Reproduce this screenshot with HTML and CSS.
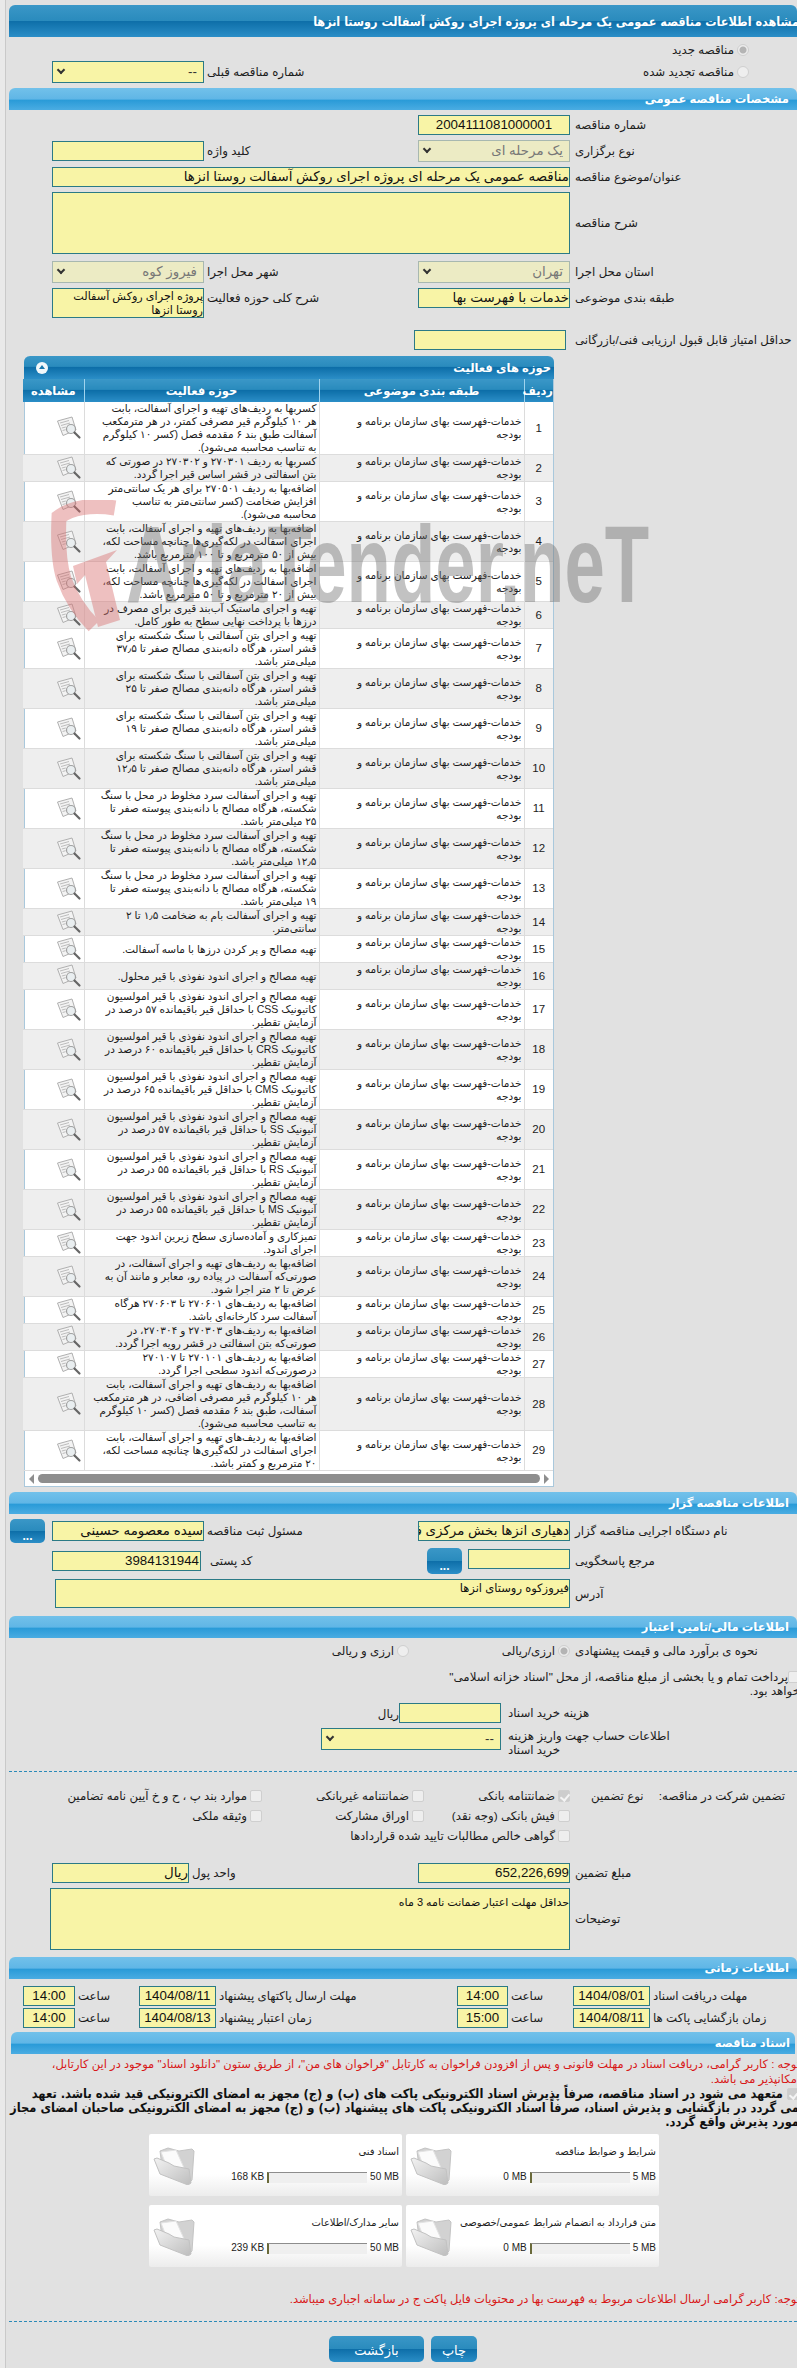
FILE: index.html
```html
<!DOCTYPE html>
<html lang="fa" dir="rtl">
<head>
<meta charset="utf-8">
<title>مشاهده اطلاعات مناقصه</title>
<link rel="stylesheet" href="styles.css">
</head>
<body>
<svg class="defs" width="0" height="0" aria-hidden="true">
  <defs>
    <symbol id="doc" viewBox="0 0 26 24">
      <path d="M1.5 5 16 1l4 13-13 5.500z" fill="#f3f3f3" stroke="#b0b0b0"/>
      <path d="M4 7l9-2.500M5 9.500l9-2.500M5.800 12l4-1M6.600 14.500l3-.8" stroke="#bcbcbc" fill="none"/>
      <circle cx="15" cy="13" r="4.500" fill="#e9eef0" stroke="#a0a0a0" stroke-width="1.200"/>
      <path d="M18.500 16.500l5 5" stroke="#666" stroke-width="2.200" stroke-linecap="round"/>
    </symbol>
    <linearGradient id="fg" x1="0" y1="0" x2="1" y2="1">
      <stop offset="0" stop-color="#f2f2f2"/>
      <stop offset="1" stop-color="#bdbdbd"/>
    </linearGradient>
    <symbol id="folder" viewBox="0 0 42 38">
      <path d="M7 4 15 1l11 3 13-2 2 2-2 29-4 4L9 20z" fill="#d2d2d2" stroke="#c4c4c4"/>
      <path d="M8 5l15-2 9 20-15 5z" fill="#fbfbfb" stroke="#e3e3e3"/>
      <path d="M1 12l3-1 12 5 5 3 15 3 2 14-3 2L7 27z" fill="url(#fg)" stroke="#c2c2c2"/>
    </symbol>
  </defs>
</svg>

<div class="shell">
<main class="page">

  <h1 class="title-bar"><span>مشاهده اطلاعات مناقصه عمومی یک مرحله ای پروژه اجرای روکش آسفالت روستا انزها</span></h1>

  <div class="row r-radio1">
    <label class="choice"><i class="radio on"></i><span>مناقصه جدید</span></label>
  </div>
  <div class="row r-prev">
    <label class="choice c-second"><i class="radio"></i><span>مناقصه تجدید شده</span></label>
    <div class="lbl l3">شماره مناقصه قبلی</div>
    <div class="select"><b class="chev"></b><span>--</span></div>
  </div>

  <h2 class="section">مشخصات مناقصه عمومی</h2>

  <div class="row m5">
    <div class="lbl">شماره مناقصه</div>
    <div class="field num center">2004111081000001</div>
  </div>
  <div class="row m5 mid">
    <div class="lbl">نوع برگزاری</div>
    <div class="select off"><b class="chev"></b><span>یک مرحله ای</span></div>
    <div class="lbl l3">کلید واژه</div>
    <div class="field"></div>
  </div>
  <div class="row m5">
    <div class="lbl">عنوان/موضوع مناقصه</div>
    <div class="field wide big">مناقصه عمومی یک مرحله ای پروژه اجرای روکش آسفالت روستا انزها</div>
  </div>
  <div class="row m5 mid">
    <div class="lbl">شرح مناقصه</div>
    <div class="field wide area"></div>
  </div>
  <div class="row m7">
    <div class="lbl">استان محل اجرا</div>
    <div class="select off"><b class="chev"></b><span>تهران</span></div>
    <div class="lbl l3">شهر محل اجرا</div>
    <div class="select off"><b class="chev"></b><span>فیروز کوه</span></div>
  </div>
  <div class="row m5 top">
    <div class="lbl">طبقه بندی موضوعی</div>
    <div class="field big">خدمات با فهرست بها</div>
    <div class="lbl l3">شرح کلی حوزه فعالیت</div>
    <div class="field two">پروژه اجرای روکش آسفالت<br>روستا انزها</div>
  </div>
  <div class="row m12">
    <div class="lbl">حداقل امتیاز قابل قبول ارزیابی فنی/بازرگانی</div>
    <div class="field shift"></div>
  </div>

  <section class="panel">
    <div class="panel-bar"><span>حوزه های فعالیت</span><b class="collapse"></b></div>
    <table class="grid">
      <colgroup><col class="c1"><col class="c2"><col class="c3"><col class="c4"></colgroup>
      <thead>
        <tr><th>ردیف</th><th>طبقه بندی موضوعی</th><th>حوزه فعالیت</th><th>مشاهده</th></tr>
      </thead>
      <tbody>
        <tr><td class="n">1</td><td class="t">خدمات-فهرست بهای سازمان برنامه و<br>بودجه</td><td class="t">کسربها به ردیف‌های تهیه و اجرای آسفالت، بابت<br>هر ۱۰ کیلوگرم قیر مصرفی کمتر، در هر مترمکعب<br>آسفالت طبق بند ۶ مقدمه فصل (کسر ۱۰ کیلوگرم<br>به تناسب محاسبه می‌شود).</td><td class="v"><svg class="ico"><use href="#doc"/></svg></td></tr>
        <tr><td class="n">2</td><td class="t">خدمات-فهرست بهای سازمان برنامه و<br>بودجه</td><td class="t">کسربها به ردیف ۲۷۰۳۰۱ و ۲۷۰۳۰۲ در صورتی که<br>بتن اسفالتی در قشر اساس قیر اجرا گردد.</td><td class="v"><svg class="ico"><use href="#doc"/></svg></td></tr>
        <tr><td class="n">3</td><td class="t">خدمات-فهرست بهای سازمان برنامه و<br>بودجه</td><td class="t">اضافه‌بها به ردیف ۲۷۰۵۰۱ برای هر یک سانتی‌متر<br>افزایش ضخامت (کسر سانتی‌متر به تناسب<br>محاسبه می‌شود).</td><td class="v"><svg class="ico"><use href="#doc"/></svg></td></tr>
        <tr><td class="n">4</td><td class="t">خدمات-فهرست بهای سازمان برنامه و<br>بودجه</td><td class="t">اضافه‌بها به ردیف‌های تهیه و اجرای آسفالت، بابت<br>اجرای اسفالت در لکه‌گیری‌ها چنانچه مساحت لکه،<br>بیش از ۵۰ مترمربع و تا ۱۰۰ مترمربع باشد.</td><td class="v"><svg class="ico"><use href="#doc"/></svg></td></tr>
        <tr><td class="n">5</td><td class="t">خدمات-فهرست بهای سازمان برنامه و<br>بودجه</td><td class="t">اضافه‌بها به ردیف‌های تهیه و اجرای آسفالت، بابت<br>اجرای اسفالت در لکه‌گیری‌ها چنانچه مساحت لکه،<br>بیش از ۲۰ مترمربع و تا ۵۰ مترمربع باشد.</td><td class="v"><svg class="ico"><use href="#doc"/></svg></td></tr>
        <tr><td class="n">6</td><td class="t">خدمات-فهرست بهای سازمان برنامه و<br>بودجه</td><td class="t">تهیه و اجرای ماستیک آب‌بند قیری برای مصرف در<br>درزها با پرداخت نهایی سطح به طور کامل.</td><td class="v"><svg class="ico"><use href="#doc"/></svg></td></tr>
        <tr><td class="n">7</td><td class="t">خدمات-فهرست بهای سازمان برنامه و<br>بودجه</td><td class="t">تهیه و اجرای بتن آسفالتی با سنگ شکسته برای<br>قشر استر، هرگاه دانه‌بندی مصالح صفر تا ۳۷٫۵<br>میلی‌متر باشد.</td><td class="v"><svg class="ico"><use href="#doc"/></svg></td></tr>
        <tr><td class="n">8</td><td class="t">خدمات-فهرست بهای سازمان برنامه و<br>بودجه</td><td class="t">تهیه و اجرای بتن آسفالتی با سنگ شکسته برای<br>قشر استر، هرگاه دانه‌بندی مصالح صفر تا ۲۵<br>میلی‌متر باشد.</td><td class="v"><svg class="ico"><use href="#doc"/></svg></td></tr>
        <tr><td class="n">9</td><td class="t">خدمات-فهرست بهای سازمان برنامه و<br>بودجه</td><td class="t">تهیه و اجرای بتن آسفالتی با سنگ شکسته برای<br>قشر استر، هرگاه دانه‌بندی مصالح صفر تا ۱۹<br>میلی‌متر باشد.</td><td class="v"><svg class="ico"><use href="#doc"/></svg></td></tr>
        <tr><td class="n">10</td><td class="t">خدمات-فهرست بهای سازمان برنامه و<br>بودجه</td><td class="t">تهیه و اجرای بتن آسفالتی با سنگ شکسته برای<br>قشر استر، هرگاه دانه‌بندی مصالح صفر تا ۱۲٫۵<br>میلی‌متر باشد.</td><td class="v"><svg class="ico"><use href="#doc"/></svg></td></tr>
        <tr><td class="n">11</td><td class="t">خدمات-فهرست بهای سازمان برنامه و<br>بودجه</td><td class="t">تهیه و اجرای آسفالت سرد مخلوط در محل با سنگ<br>شکسته، هرگاه مصالح با دانه‌بندی پیوسته صفر تا<br>۲۵ میلی‌متر باشد.</td><td class="v"><svg class="ico"><use href="#doc"/></svg></td></tr>
        <tr><td class="n">12</td><td class="t">خدمات-فهرست بهای سازمان برنامه و<br>بودجه</td><td class="t">تهیه و اجرای آسفالت سرد مخلوط در محل با سنگ<br>شکسته، هرگاه مصالح با دانه‌بندی پیوسته صفر تا<br>۱۲٫۵ میلی‌متر باشد.</td><td class="v"><svg class="ico"><use href="#doc"/></svg></td></tr>
        <tr><td class="n">13</td><td class="t">خدمات-فهرست بهای سازمان برنامه و<br>بودجه</td><td class="t">تهیه و اجرای آسفالت سرد مخلوط در محل با سنگ<br>شکسته، هرگاه مصالح با دانه‌بندی پیوسته صفر تا<br>۱۹ میلی‌متر باشد.</td><td class="v"><svg class="ico"><use href="#doc"/></svg></td></tr>
        <tr><td class="n">14</td><td class="t">خدمات-فهرست بهای سازمان برنامه و<br>بودجه</td><td class="t">تهیه و اجرای آسفالت بام به ضخامت ۱٫۵ تا ۲<br>سانتی‌متر.</td><td class="v"><svg class="ico"><use href="#doc"/></svg></td></tr>
        <tr><td class="n">15</td><td class="t">خدمات-فهرست بهای سازمان برنامه و<br>بودجه</td><td class="t">تهیه مصالح و پر کردن درزها با ماسه آسفالت.</td><td class="v"><svg class="ico"><use href="#doc"/></svg></td></tr>
        <tr><td class="n">16</td><td class="t">خدمات-فهرست بهای سازمان برنامه و<br>بودجه</td><td class="t">تهیه مصالح و اجرای اندود نفوذی با قیر محلول.</td><td class="v"><svg class="ico"><use href="#doc"/></svg></td></tr>
        <tr><td class="n">17</td><td class="t">خدمات-فهرست بهای سازمان برنامه و<br>بودجه</td><td class="t">تهیه مصالح و اجرای اندود نفوذی با قیر امولسیون<br>کاتیونیک CSS با حداقل قیر باقیمانده ۵۷ درصد در<br>آزمایش تقطیر.</td><td class="v"><svg class="ico"><use href="#doc"/></svg></td></tr>
        <tr><td class="n">18</td><td class="t">خدمات-فهرست بهای سازمان برنامه و<br>بودجه</td><td class="t">تهیه مصالح و اجرای اندود نفوذی با قیر امولسیون<br>کاتیونیک CRS با حداقل قیر باقیمانده ۶۰ درصد در<br>آزمایش تقطیر.</td><td class="v"><svg class="ico"><use href="#doc"/></svg></td></tr>
        <tr><td class="n">19</td><td class="t">خدمات-فهرست بهای سازمان برنامه و<br>بودجه</td><td class="t">تهیه مصالح و اجرای اندود نفوذی با قیر امولسیون<br>کاتیونیک CMS با حداقل قیر باقیمانده ۶۵ درصد در<br>آزمایش تقطیر.</td><td class="v"><svg class="ico"><use href="#doc"/></svg></td></tr>
        <tr><td class="n">20</td><td class="t">خدمات-فهرست بهای سازمان برنامه و<br>بودجه</td><td class="t">تهیه مصالح و اجرای اندود نفوذی با قیر امولسیون<br>آنیونیک SS با حداقل قیر باقیمانده ۵۷ درصد در<br>آزمایش تقطیر.</td><td class="v"><svg class="ico"><use href="#doc"/></svg></td></tr>
        <tr><td class="n">21</td><td class="t">خدمات-فهرست بهای سازمان برنامه و<br>بودجه</td><td class="t">تهیه مصالح و اجرای اندود نفوذی با قیر امولسیون<br>آنیونیک RS با حداقل قیر باقیمانده ۵۵ درصد در<br>آزمایش تقطیر.</td><td class="v"><svg class="ico"><use href="#doc"/></svg></td></tr>
        <tr><td class="n">22</td><td class="t">خدمات-فهرست بهای سازمان برنامه و<br>بودجه</td><td class="t">تهیه مصالح و اجرای اندود نفوذی با قیر امولسیون<br>آنیونیک MS با حداقل قیر باقیمانده ۵۵ درصد در<br>آزمایش تقطیر.</td><td class="v"><svg class="ico"><use href="#doc"/></svg></td></tr>
        <tr><td class="n">23</td><td class="t">خدمات-فهرست بهای سازمان برنامه و<br>بودجه</td><td class="t">تمیزکاری و آماده‌سازی سطح زیرین اندود جهت<br>اجرای اندود.</td><td class="v"><svg class="ico"><use href="#doc"/></svg></td></tr>
        <tr><td class="n">24</td><td class="t">خدمات-فهرست بهای سازمان برنامه و<br>بودجه</td><td class="t">اضافه‌بها به ردیف‌های تهیه و اجرای آسفالت، در<br>صورتی‌که آسفالت در پیاده رو، معابر و مانند آن به<br>عرض تا ۲ متر اجرا شود.</td><td class="v"><svg class="ico"><use href="#doc"/></svg></td></tr>
        <tr><td class="n">25</td><td class="t">خدمات-فهرست بهای سازمان برنامه و<br>بودجه</td><td class="t">اضافه‌بها به ردیف‌های ۲۷۰۶۰۱ تا ۲۷۰۶۰۳ هرگاه<br>آسفالت سرد کارخانه‌ای باشد.</td><td class="v"><svg class="ico"><use href="#doc"/></svg></td></tr>
        <tr><td class="n">26</td><td class="t">خدمات-فهرست بهای سازمان برنامه و<br>بودجه</td><td class="t">اضافه‌بها به ردیف‌های ۲۷۰۳۰۳ و ۲۷۰۳۰۴، در<br>صورتی‌که بتن اسفالتی در قشر رویه اجرا گردد.</td><td class="v"><svg class="ico"><use href="#doc"/></svg></td></tr>
        <tr><td class="n">27</td><td class="t">خدمات-فهرست بهای سازمان برنامه و<br>بودجه</td><td class="t">اضافه‌بها به ردیف‌های ۲۷۰۱۰۱ تا ۲۷۰۱۰۷<br>درصورتی‌که اندود سطحی اجرا گردد.</td><td class="v"><svg class="ico"><use href="#doc"/></svg></td></tr>
        <tr><td class="n">28</td><td class="t">خدمات-فهرست بهای سازمان برنامه و<br>بودجه</td><td class="t">اضافه‌بها به ردیف‌های تهیه و اجرای آسفالت، بابت<br>هر ۱۰ کیلوگرم قیر مصرفی اضافی، در هر مترمکعب<br>آسفالت، طبق بند ۶ مقدمه فصل (کسر ۱۰ کیلوگرم<br>به تناسب محاسبه می‌شود).</td><td class="v"><svg class="ico"><use href="#doc"/></svg></td></tr>
        <tr><td class="n">29</td><td class="t">خدمات-فهرست بهای سازمان برنامه و<br>بودجه</td><td class="t">اضافه‌بها به ردیف‌های تهیه و اجرای آسفالت، بابت<br>اجرای اسفالت در لکه‌گیری‌ها چنانچه مساحت لکه،<br>۲۰ مترمربع و کمتر باشد.</td><td class="v"><svg class="ico"><use href="#doc"/></svg></td></tr>
      </tbody>
    </table>
    <div class="hscroll"><i class="arrow right"></i><i class="thumb"></i><i class="arrow left"></i></div>
    <div class="watermark" aria-hidden="true">
      <svg class="wm-shield" viewBox="0 0 90 145">
        <path d="M64 8C40 4 20 8 8 17c-1 22-1 44 5 62 6 17 16 33 30 47" fill="none" stroke="#d86a6a" stroke-width="15"/>
        <path d="M22 66 66 50 55 62l14 58-22 7-13-52-8 9z" fill="#d86a6a"/>
      </svg>
      <span class="wm-text">AriaTender.neT</span>
    </div>
  </section>

  <h2 class="section m5">اطلاعات مناقصه گزار</h2>

  <div class="row m5 r-owner">
    <div class="lbl">نام دستگاه اجرایی مناقصه گزار</div>
    <div class="field big">دهیاری انزها بخش مرکزی فیروزکوه</div>
    <div class="lbl l3">مسئول ثبت مناقصه</div>
    <div class="field big">سیده معصومه حسینی</div>
    <button class="btn dots" type="button">...</button>
  </div>
  <div class="row m5 r-ref">
    <div class="lbl">مرجع پاسخگویی</div>
    <div class="ref-cell"><div class="field"></div><button class="btn dots tall" type="button">...</button></div>
    <div class="lbl l6">کد پستی</div>
    <div class="field num post">3984131944</div>
  </div>
  <div class="row m5 mid">
    <div class="lbl">آدرس</div>
    <div class="field wide addr">فیروزکوه روستای انزها</div>
  </div>

  <h2 class="section m8">اطلاعات مالی/تامین اعتبار</h2>

  <div class="row m6 r-fin">
    <div class="lbl">نحوه ی برآورد مالی و قیمت پیشنهادی</div>
    <div class="fin-opts">
      <label class="choice"><i class="radio on"></i><span>ارزی/ریالی</span></label>
      <label class="choice"><i class="radio"></i><span>ارزی و ریالی</span></label>
    </div>
  </div>
  <p class="treasury"><i class="check"></i>پرداخت تمام و یا بخشی از مبلغ مناقصه، از محل "اسناد خزانه اسلامی"<br>خواهد بود.</p>

  <div class="flex-row m5">
    <div class="lbl l-fee">هزینه خرید اسناد</div>
    <div class="field fee"></div>
    <span class="unit">ریال</span>
  </div>
  <div class="flex-row m3">
    <div class="lbl l-fee">اطلاعات حساب جهت واریز هزینه<br>خرید اسناد</div>
    <div class="select acct"><b class="chev"></b><span>--</span></div>
  </div>

  <hr class="dash d1">

  <div class="guarantee">
    <div class="g-head"><span>تضمین شرکت در مناقصه:</span><span>نوع تضمین</span></div>
    <div class="g-grid">
      <label class="choice"><i class="check on"></i><span>ضمانتنامه بانکی</span></label>
      <label class="choice"><i class="check"></i><span>ضمانتنامه غیربانکی</span></label>
      <label class="choice"><i class="check"></i><span>موارد بند پ ، ح و خ آیین نامه تضامین</span></label>
      <label class="choice"><i class="check"></i><span>فیش بانکی (وجه نقد)</span></label>
      <label class="choice"><i class="check"></i><span>اوراق مشارکت</span></label>
      <label class="choice"><i class="check"></i><span>وثیقه ملکی</span></label>
      <label class="choice"><i class="check"></i><span>گواهی خالص مطالبات تایید شده قراردادها</span></label>
    </div>
  </div>

  <div class="row r-amount">
    <div class="lbl">مبلغ تضمین</div>
    <div class="field num end">652,226,699</div>
    <div class="lbl l3">واحد پول</div>
    <div class="field big">ریال</div>
  </div>
  <div class="row m5 mid">
    <div class="lbl">توضیحات</div>
    <div class="field wide note">حداقل مهلت اعتبار ضمانت نامه 3 ماه</div>
  </div>

  <h2 class="section m7">اطلاعات زمانی</h2>

  <div class="times">
    <div class="lbl">مهلت دریافت اسناد</div><div class="field num center">1404/08/01</div>
    <div class="lbl">ساعت</div><div class="field num center">14:00</div>
    <div class="lbl">مهلت ارسال پاکتهای پیشنهاد</div><div class="field num center">1404/08/11</div>
    <div class="lbl">ساعت</div><div class="field num center">14:00</div>
    <div class="lbl">زمان بازگشایی پاکت ها</div><div class="field num center">1404/08/11</div>
    <div class="lbl">ساعت</div><div class="field num center">15:00</div>
    <div class="lbl">زمان اعتبار پیشنهاد</div><div class="field num center">1404/08/13</div>
    <div class="lbl">ساعت</div><div class="field num center">14:00</div>
  </div>

  <h2 class="section inset">اسناد مناقصه</h2>

  <p class="red">توجه : کاربر گرامی، دریافت اسناد در مهلت قانونی و پس از افزودن فراخوان به کارتابل "فراخوان های من"، از طریق ستون "دانلود اسناد" موجود در این کارتابل،<br>امکانپذیر می باشد.</p>
  <p class="pledge"><i class="check on"></i> متعهد می شود در اسناد مناقصه، صرفاً پذیرش اسناد الکترونیکی پاکت های (ب) و (ج) مجهز به امضای الکترونیکی قید شده باشد. تعهد<br>می گردد در بازگشایی و پذیرش اسناد، صرفاً اسناد الکترونیکی پاکت های پیشنهاد (ب) و (ج) مجهز به امضای الکترونیکی صاحبان امضای مجاز<br>مورد پذیرش واقع گردد.</p>

  <div class="cards">
    <article class="card">
      <div class="card-body"><div class="card-title">شرایط و ضوابط مناقصه</div>
        <div class="meter"><span>5 MB</span><i class="track"></i><span>0 MB</span></div></div>
      <svg class="folder"><use href="#folder"/></svg>
    </article>
    <article class="card">
      <div class="card-body"><div class="card-title">اسناد فنی</div>
        <div class="meter"><span>50 MB</span><i class="track"></i><span>168 KB</span></div></div>
      <svg class="folder"><use href="#folder"/></svg>
    </article>
    <article class="card">
      <div class="card-body"><div class="card-title">متن قرارداد به انضمام شرایط عمومی/خصوصی</div>
        <div class="meter"><span>5 MB</span><i class="track"></i><span>0 MB</span></div></div>
      <svg class="folder"><use href="#folder"/></svg>
    </article>
    <article class="card">
      <div class="card-body"><div class="card-title">سایر مدارک/اطلاعات</div>
        <div class="meter"><span>50 MB</span><i class="track"></i><span>239 KB</span></div></div>
      <svg class="folder"><use href="#folder"/></svg>
    </article>
  </div>

  <p class="red one">توجه: کاربر گرامی ارسال اطلاعات مربوط به فهرست بها در محتویات فایل پاکت ج در سامانه اجباری میباشد.</p>

  <hr class="dash d2">

  <div class="actions">
    <button class="btn act print" type="button">چاپ</button>
    <button class="btn act back" type="button">بازگشت</button>
  </div>

</main>
</div>
</body>
</html>
```

FILE: styles.css
```css
* { box-sizing: border-box; }
html, body { margin: 0; padding: 0; overflow: hidden; width: 797px; height: 2368px; }
body {
  background: #e9e9e9;
  color: #1c1c1c;
  font-family: "Liberation Sans", "DejaVu Sans", sans-serif;
  font-size: 11.8px;
  line-height: 14px;
}
.defs { position: absolute; }
.shell {
  margin-left: 5px;
  padding: 0 0 0 3px;
  border-left: 1px solid #c9c9c9;
  background: #e1e1e1;
  height: 2368px;
}
.page { width: 788px; padding-top: 5px; }

.title-bar {
  margin: 0;
  height: 32px;
  padding-top: 2px;
  display: flex;
  align-items: center;
  white-space: nowrap;
  color: #fff;
  font-family: "DejaVu Sans Condensed", "DejaVu Sans", sans-serif;
  font-size: 12.5px;
  font-weight: bold;
  border-radius: 6px 6px 0 0;
  background: linear-gradient(#3a97c7 0, #2a8bbd 49%, #0d6ea8 50%, #2b8ec7 100%);
}
.title-bar span { margin-right: -2px; }

.section {
  margin: 5px 0 0;
  height: 22px;
  padding: 0 8px 0 0;
  display: flex;
  align-items: center;
  color: #fff;
  font-size: 11.5px;
  font-weight: bold;
  border-radius: 6px 6px 0 0;
  background: linear-gradient(#72c1ea 0, #60b6e6 50%, #2a9bd8 56%, #4aace2 100%);
}
.section.inset { margin: 4px 2px 0; padding-right: 5px; }

.row {
  display: grid;
  grid-template-columns: 227px 152px 214px 152px;
  align-items: center;
}
.m3 { margin-top: 3px; }
.m5 { margin-top: 5px; }
.m6 { margin-top: 6px; }
.m7 { margin-top: 7px; }
.m8 { margin-top: 8px; }
.m12 { margin-top: 12px; }
.section.m5 { margin-top: 5px; }
.section.m7 { margin-top: 7px; }
.section.m8 { margin-top: 8px; }
.top { align-items: start; }

.lbl { text-align: left; padding-left: 5px; white-space: nowrap; }
.lbl.l3 { padding-left: 3px; }
.lbl.l6 { padding-left: 6px; }
.top .lbl { line-height: 20px; }

.field {
  height: 20px;
  border: 1px solid #2b7a86;
  background: #f8f4a6;
  color: #111;
  font-size: 13.4px;
  line-height: 18px;
  white-space: nowrap;
  overflow: hidden;
}
.field.num { font-size: 13.3px; direction: ltr; text-align: right; padding-right: 1px; }
.field.num.center { text-align: center; padding: 0; }
.field.wide { grid-column: 2 / span 3; }
.field.area { height: 62px; }
.field.two { height: 30px; font-size: 11.2px; line-height: 14px; }
.field.shift { width: 152px; margin: 0 4px 0 -4px; }
.field.addr { height: 29px; margin-left: 3px; font-size: 11.5px; line-height: 16px; }
.field.note { height: 62px; margin-left: -2px; font-size: 11px; line-height: 18px; padding-top: 4px; }

.select {
  height: 22px;
  border: 1px solid #2b7a86;
  background: #f8f4a6;
  display: flex;
  align-items: center;
  justify-content: space-between;
  flex-direction: row-reverse;
  padding: 0 6px 0 4px;
  font-size: 13.4px;
  color: #333;
}
.select.off { background: #ecebc4; border-color: #a8b8b0; color: #777; }
.chev {
  width: 6px;
  height: 6px;
  margin: -4px 0 0 1px;
  border: solid #333;
  border-width: 0 0 2px 2px;
  transform: rotate(-45deg);
}

.choice { display: inline-flex; align-items: center; gap: 3px; white-space: nowrap; }
.radio, .check {
  display: inline-block;
  flex: none;
  width: 12px;
  height: 12px;
  background: #eee;
  border: 1px solid #cfcfcf;
}
.radio { border-radius: 50%; }
.radio.on { background: radial-gradient(circle, #b4b4b4 0 3px, #ececec 4px); }
.check { border-radius: 2px; }
.check.on { background: #cdcdcd; position: relative; }
.check.on::after {
  content: "";
  position: absolute;
  left: 3px;
  top: 1px;
  width: 4px;
  height: 7px;
  border: solid #f4f4f4;
  border-width: 0 2px 2px 0;
  transform: rotate(40deg);
}

.r-radio1 { margin-top: 6px; height: 14px; display: block; padding-right: 48px; }
.r-prev { margin-top: 4px; }
.c-second { grid-column: 1 / span 2; padding-right: 48px; }

.panel {
  position: relative;
  width: 530px;
  margin: 6px 243px 0 0;
  background: #fff;
  border: solid #a9c8dc;
  border-width: 0 1px 1px;
  border-radius: 6px 6px 0 0;
}
.panel-bar {
  height: 23px;
  margin: 0 -1px;
  padding: 0 3px 0 12px;
  display: flex;
  justify-content: space-between;
  align-items: center;
  color: #fff;
  font-weight: bold;
  font-size: 11.5px;
  border-radius: 6px 6px 0 0;
  background: linear-gradient(#3a97c7 0, #2a8bbd 45%, #0d6ea8 50%, #2b8ec7 100%);
}
.collapse {
  position: relative;
  width: 12px;
  height: 12px;
  background: #f2f8fb;
  border-radius: 50%;
}
.collapse::after {
  content: "";
  position: absolute;
  left: 3px;
  top: 3px;
  border: 3px solid transparent;
  border-top: 0;
  border-bottom: 4px solid #1a78ad;
}
.grid { width: 100%; border-collapse: collapse; table-layout: fixed; }
.c1 { width: 29px; }
.c2 { width: 205px; }
.c3 { width: 235px; }
.c4 { width: 61px; }
.grid th {
  height: 23px;
  padding: 0;
  color: #fff;
  font-size: 11.5px;
  border-right: 1px solid #9fd3ee;
  background: linear-gradient(#3a97c7 0, #2a8bbd 45%, #0d6ea8 50%, #2b8ec7 100%);
}
.grid th:first-child { border-right: 0; }
.grid td {
  padding: 0;
  font-size: 10.5px;
  line-height: 13px;
  border-bottom: 1px solid #dcdcdc;
  border-right: 1px solid #dcdcdc;
  vertical-align: middle;
}
.grid td:first-child { border-right: 0; }
.grid tbody tr:nth-child(even) td { background: #eeeeee; }
.grid .n { text-align: center; font-size: 11.5px; }
.grid .t { text-align: right; padding-right: 2px; white-space: nowrap; }
.grid .v { text-align: right; padding-right: 2px; }
.ico { display: block; width: 26px; height: 24px; margin: 0 0 0 auto; }
.hscroll {
  height: 15px;
  display: flex;
  align-items: center;
  gap: 3px;
  padding: 0 3px;
  background: #fff;
}
.thumb { flex: 1; height: 9px; border-radius: 5px; background: #8e8e8e; }
.arrow { width: 0; height: 0; border: 5px solid transparent; margin: 0 1px; }
.arrow.left { border-right-color: #8e8e8e; border-left: 0; }
.arrow.right { border-left-color: #8e8e8e; border-right: 0; }

.watermark { position: absolute; left: 26px; top: 144px; width: 610px; height: 150px; pointer-events: none; direction: ltr; }
.wm-shield { position: absolute; left: 0; top: 0; width: 90px; height: 145px; opacity: .42; }
.wm-text {
  position: absolute;
  left: 75px;
  top: 9px;
  font-family: "Liberation Sans", sans-serif;
  font-size: 110px;
  line-height: 110px;
  font-weight: bold;
  color: rgba(110, 110, 110, .42);
  white-space: nowrap;
  transform-origin: 0 0;
  transform: scaleX(.66);
}

.btn {
  border: 0;
  border-radius: 5px;
  color: #fff;
  font-family: inherit;
  background: linear-gradient(#3a97c7 0, #2a8bbd 49%, #0d6ea8 50%, #2b8ec7 100%);
  padding: 0;
}
.btn.dots { width: 35px; height: 24px; font-size: 12px; font-weight: bold; line-height: 10px; padding-top: 10px; margin-right: 7px; }
.btn.dots.tall { height: 26px; margin: 0; }
.r-owner { grid-template-columns: 227px 152px 214px 152px 43px; }
.ref-cell { display: flex; gap: 6px; align-items: flex-start; }
.ref-cell .field { width: 102px; flex: none; margin-top: 1px; }
.r-ref .post { justify-self: end; margin-top: 3px; width: 149px; }
.r-ref { align-items: start; }
.r-ref .lbl { line-height: 26px; }

.r-fin { height: 14px; }
.fin-opts { grid-column: 2 / span 3; display: grid; grid-template-columns: 161px auto; justify-content: start; }
.treasury { margin: 12px -3px 0 0; white-space: nowrap; line-height: 14px; }
.treasury .check { vertical-align: -2px; }

.flex-row { display: flex; align-items: flex-start; }
.l-fee { width: 296px; padding-left: 7px; flex: none; line-height: 14px; }
.field.fee { width: 102px; }
.flex-row .l-fee { padding-top: 3px; }
.unit { padding-top: 4px; }
.select.acct { width: 180px; margin-top: 2px; }

.dash { border: 0; border-top: 1px dashed #2b8ab8; margin: 0; height: 0; }
.d1 { margin-top: 14px; }
.d2 { margin-top: 15px; }

.guarantee { display: grid; grid-template-columns: 227px auto; justify-content: start; margin-top: 14px; }
.g-head { display: flex; justify-content: space-between; padding: 3px 12px 0 21px; white-space: nowrap; }
.g-grid { display: grid; grid-template-columns: 146px 162px auto; grid-auto-rows: 20px; justify-content: start; align-items: center; }
.g-grid .choice:last-child { grid-column: 1 / span 3; }

.r-amount { margin-top: 17px; grid-template-columns: 227px 152px 229px 137px; }
.field.end { padding-right: 0; }

.times {
  margin-top: 7px;
  display: grid;
  grid-template-columns: 147px 77px 65px 51px 241px 77px 64px 52px;
  row-gap: 2px;
  align-items: center;
}
.times .lbl { padding-left: 3px; }

.red { margin: 3px -3px 0 0; color: #d81818; font-size: 11.5px; line-height: 15px; white-space: nowrap; }
.red.one { margin-top: 25px; line-height: 14px; }
.pledge {
  margin: 0 -2px 0 0;
  font-family: "DejaVu Sans Condensed", "DejaVu Sans", sans-serif;
  font-size: 12.8px;
  line-height: 14px;
  font-weight: bold;
  color: #111;
  white-space: nowrap;
}
.pledge .check { vertical-align: -2px; }

.cards {
  width: 510px;
  margin: 5px 138px 0 0;
  display: grid;
  grid-template-columns: 253px 253px;
  column-gap: 4px;
  row-gap: 9px;
}
.card {
  height: 62px;
  padding: 0 3px 0 4px;
  display: flex;
  align-items: flex-start;
  border-radius: 2px;
  background: linear-gradient(#fff 0, #fff 65%, #ececec 100%);
}
.card-body { flex: 1; min-width: 0; }
.card-title { margin-top: 11px; font-size: 10px; line-height: 14px; white-space: nowrap; }
.meter { display: flex; align-items: center; gap: 3px; margin-top: 11px; font-size: 10px; }
.meter span { direction: ltr; unicode-bidi: isolate; }
.track {
  flex: none;
  width: 100px;
  height: 11px;
  background: #efefef;
  border-top: 1px solid #8d8d8d;
  border-left: 2px solid #6a6a3a;
}
.folder { flex: none; width: 42px; height: 38px; margin-top: 13px; }

.actions { display: flex; gap: 7px; margin: 14px 320px 0 0; }
.btn.act { height: 26px; font-size: 13px; padding-top: 3px; }
.btn.print { width: 46px; }
.btn.back { width: 95px; }
```
